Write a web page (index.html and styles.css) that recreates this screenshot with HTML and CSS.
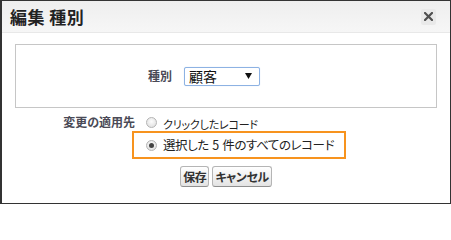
FILE: index.html
```html
<!DOCTYPE html>
<html lang="ja">
<head>
<meta charset="utf-8">
<title>編集 種別</title>
<link rel="stylesheet" href="styles.css">
</head>
<body>
<div class="dialog">
  <div class="header">
    <h1 class="title">編集 種別</h1>
    <button class="close" aria-label="閉じる">
      <svg width="9" height="9" viewBox="0 0 9 9"><path d="M1 1 L8 8 M8 1 L1 8" stroke="#4f4f4f" stroke-width="2.2" stroke-linecap="square"/></svg>
    </button>
  </div>
  <div class="content">
    <div class="fieldbox">
      <label class="field-label">種別</label>
      <div class="select">
        <span class="select-value">顧客</span>
        <svg class="select-arrow" width="7" height="6" viewBox="0 0 7 6"><path d="M0 0 H7 L3.5 6 Z" fill="#111"/></svg>
      </div>
    </div>
    <div class="scope">
      <div class="scope-label">変更の適用先</div>
      <div class="options">
        <label class="option"><span class="radio"></span><span class="opt-text small">クリックしたレコード</span></label>
        <label class="option highlighted"><span class="radio checked"></span><span class="opt-text">選択した 5 件のすべてのレコード</span></label>
      </div>
    </div>
    <div class="buttons">
      <button class="btn">保存</button>
      <button class="btn">キャンセル</button>
    </div>
  </div>
</div>
</body>
</html>
```

FILE: styles.css
```css
* { box-sizing: border-box; }
html, body { margin: 0; padding: 0; background: #fff; }
body {
  font-family: "Noto Sans CJK JP", "Noto Sans", sans-serif;
  font-feature-settings: "palt";
  color: #222;
}
.dialog {
  width: 451px;
  height: 204px;
  border: 1px solid #333;
  border-left-width: 2px;
  display: flex;
  flex-direction: column;
  background: #fff;
}
.header {
  height: 32px;
  flex: none;
  display: flex;
  align-items: center;
  justify-content: space-between;
  padding: 0 14px 0 8px;
  background: linear-gradient(#eeeeee, #f6f6f6);
  border-bottom: 1px solid #e8e8e8;
}
.title {
  margin: 0;
  font-size: 17px;
  font-weight: bold;
  line-height: 20px;
  color: #222;
  letter-spacing: 0.5px;
}
.close {
  width: 15px;
  height: 16px;
  padding: 0;
  border: none;
  border-radius: 2px;
  background: #e9e9e9;
  display: flex;
  align-items: center;
  justify-content: center;
}
.content {
  padding: 11px 13px 0 13px;
  display: flex;
  flex-direction: column;
}
.fieldbox {
  height: 64px;
  border: 1px solid #c6c6c6;
  display: grid;
  grid-template-columns: 156px 76px;
  column-gap: 12px;
  align-items: center;
}
.field-label {
  text-align: right;
  font-size: 12px;
  font-weight: bold;
  color: #4a4a56;
  line-height: 16px;
}
.select {
  height: 19px;
  border: 1px solid #8db2e3;
  border-radius: 2px;
  box-shadow: 0 0 1px #bcd4f2;
  display: flex;
  align-items: center;
  justify-content: space-between;
  padding: 0 7px 0 4px;
  background: #fff;
}
.select-value {
  font-size: 14px;
  line-height: 17px;
  color: #111;
}
.scope {
  display: grid;
  grid-template-columns: 120px auto;
  column-gap: 11px;
  margin-top: 5px;
}
.scope-label {
  text-align: right;
  font-size: 12px;
  font-weight: bold;
  color: #4a4a56;
  line-height: 16px;
  padding-top: 1px;
}
.options {
  display: flex;
  flex-direction: column;
}
.option {
  display: flex;
  align-items: center;
  gap: 6px;
  height: 18px;
  white-space: nowrap;
}
.option.highlighted {
  height: 28px;
  width: 214px;
  margin-left: -14px;
  padding-left: 12px;
  border: 2px solid #f7931e;
}
.radio {
  width: 11px;
  height: 11px;
  border-radius: 50%;
  border: 1px solid #b4b4b4;
  background: radial-gradient(circle at 50% 40%, #fdfdfd, #dadada);
  flex: none;
  display: flex;
  align-items: center;
  justify-content: center;
}
.radio.checked::after {
  content: "";
  width: 5px;
  height: 5px;
  border-radius: 50%;
  background: #444;
}
.opt-text {
  font-size: 12.5px;
  letter-spacing: -0.4px;
  word-spacing: 1px;
  line-height: 18px;
  color: #222;
  white-space: nowrap;
}
.opt-text.small {
  font-size: 11px;
  letter-spacing: -0.2px;
  line-height: 16px;
  padding-top: 3px;
}
.buttons {
  display: flex;
  justify-content: center;
  gap: 3px;
  margin-top: 7px;
}
.btn {
  height: 21px;
  padding: 0 2px;
  border: 1px solid #b5b5b5;
  border-bottom-color: #8f8f8f;
  border-radius: 3px;
  background: linear-gradient(#ffffff, #e3e3e3);
  font-family: "Noto Sans CJK JP", "Noto Sans", sans-serif;
  font-feature-settings: "palt";
  font-size: 12px;
  font-weight: bold;
  letter-spacing: -0.4px;
  color: #333;
  line-height: 18px;
}
```
